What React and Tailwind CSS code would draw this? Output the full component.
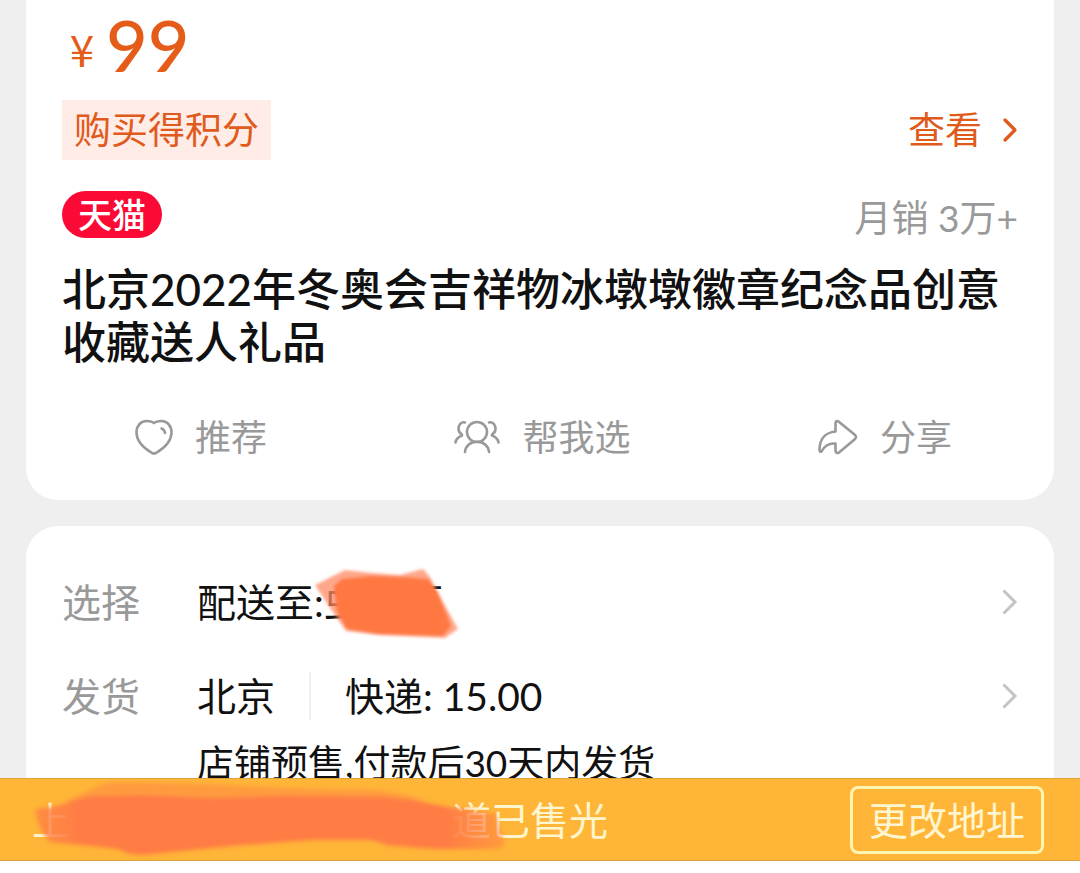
import { ChevronRight } from 'lucide-react';

const product = {
  price: '99',
  title: '北京2022年冬奥会吉祥物冰墩墩徽章纪念品创意收藏送人礼品',
  sales: '月销 3万+',
  origin: '北京',
  shipping: '快递: 15.00',
  note: '店铺预售,付款后30天内发货',
};

const HeartIcon = () => (
  <svg width="38" height="36" viewBox="0 0 38 36" fill="none" stroke="currentColor" strokeWidth="2.6" strokeLinecap="round" strokeLinejoin="round" aria-hidden="true">
    <path d="M19 4.2C17.5 2.7 14.5 2 11.5 2C5.5 2 1.5 7 1.5 13.5C1.5 22 9.5 29.5 17 34Q19 35 21 34C28.5 29.5 36.5 22 36.5 13.5C36.5 7 32.5 2 26.5 2C23.5 2 20.5 2.7 19 4.2Z" />
    <path d="M26.5 9.5Q29.5 10.5 30 14" />
  </svg>
);

const PeopleIcon = () => (
  <svg width="46" height="34" viewBox="0 0 46 34" fill="none" stroke="currentColor" strokeWidth="2.6" strokeLinecap="round" strokeLinejoin="round" aria-hidden="true">
    <circle cx="23" cy="12" r="10" />
    <path d="M11 32C11.5 26 16 21.8 23 21.8C30 21.8 34.5 26 35 32" />
    <path d="M11 2.5C7 1.5 4.5 5 4.5 9C4.5 11.5 5.5 13 8 14.5V15.5C4 17 2 19.5 1.5 22.5" />
    <path d="M35 2.5C39 1.5 41.5 5 41.5 9C41.5 11.5 40.5 13 38 14.5V15.5C42 17 44 19.5 44.5 22.5" />
  </svg>
);

const ShareIcon = () => (
  <svg width="40" height="36" viewBox="0 0 40 36" fill="none" stroke="currentColor" strokeWidth="2.6" strokeLinecap="round" strokeLinejoin="round" aria-hidden="true">
    <path d="M17.5 12.5V4Q18 1.3 20.5 2.5L36.5 15.5Q39.5 18 36.5 20.5L21 33.5Q18 35 17.5 32V24.5C11 24 6.5 26.5 3.5 32.5Q2 33.5 1.5 31C1.5 20.5 7 13.5 17.5 12.5Z" />
  </svg>
);

const actions = [
  { label: '推荐', Icon: HeartIcon },
  { label: '帮我选', Icon: PeopleIcon },
  { label: '分享', Icon: ShareIcon },
];

const RowArrow = () => (
  <svg className="ml-auto shrink-0" width="16" height="26" viewBox="0 0 16 26" fill="none" stroke="#c4c4c4" strokeWidth="3" aria-hidden="true">
    <path d="M1.5 1.5L13 13L1.5 24.5" />
  </svg>
);

// Marker strokes drawn over the private parts of the address
const AddressMark = () => (
  <svg className="absolute top-0 left-0 overflow-visible" width="146" height="72" viewBox="0 0 146 72" aria-hidden="true">
    <defs>
      <filter id="soft-edge" x="-10%" y="-10%" width="120%" height="120%">
        <feGaussianBlur stdDeviation="1.5" />
      </filter>
    </defs>
    <g filter="url(#soft-edge)">
      <path d="M3 19L33 4L60 7L88 9L111 3L118 11L131 36L146 63L133 72L66 69L34 65L18 42Z" fill="#ff8a64" opacity="0.75" />
      <path d="M30 13L60 10L90 11L116 13L126 27L139 60L131 70L66 68L35 63L25 46L22 20Z" fill="#ff7842" />
    </g>
  </svg>
);

const BarMark = () => (
  <svg className="absolute top-0 left-0" width="476" height="80" viewBox="0 0 476 80" aria-hidden="true">
    <defs>
      <linearGradient id="mark" x1="0" x2="1">
        <stop offset="0" stopColor="#ff7c45" stopOpacity="0.7" />
        <stop offset="0.07" stopColor="#ff7c45" stopOpacity="0.9" />
        <stop offset="0.1" stopColor="#ff7c45" />
        <stop offset="0.87" stopColor="#ff7c45" />
        <stop offset="0.94" stopColor="#ff7c45" stopOpacity="0.7" />
        <stop offset="1" stopColor="#ff7c45" stopOpacity="0.45" />
      </linearGradient>
      <filter id="soft-mark" x="-5%" y="-10%" width="110%" height="120%">
        <feGaussianBlur stdDeviation="2" />
      </filter>
    </defs>
    <g filter="url(#soft-mark)">
      <path d="M34 22C60 12 66 3 86 3L150 4L280 10L340 11C370 14 385 18 400 26L300 32L60 40Z" fill="#ff9640" opacity="0.85" />
      <path d="M3 30Q26 28 40 22Q56 16 76 17L110 16L180 19L250 17L350 18C385 21 400 26 430 30L464 35L473 64Q472 71 456 70L400 70L354 66Q346 61 330 61L280 61L200 67L150 72L112 76L98 75L86 70L50 66L18 63Q6 52 3 30Z" fill="url(#mark)" />
    </g>
  </svg>
);

export default function App() {
  return (
    <div
      lang="zh-CN"
      className="flex h-screen flex-col bg-white font-['Lato','Noto_Sans_CJK_SC',sans-serif] text-[#111]"
    >
      <main className="flex min-h-0 flex-1 flex-col gap-[26px] overflow-hidden bg-[#efefef] px-[26px]">
        {/* Price and title */}
        <section className="shrink-0 rounded-b-[32px] bg-white px-9 pb-[43px]">
          <div className="flex h-[100px] items-start gap-2 pl-1 text-[#e45c18]">
            <span className="w-8 text-center font-['Noto_Sans_CJK_SC',sans-serif] text-[44px] leading-[96px]">¥</span>
            <span className="text-[72px] leading-[88px] font-medium">{product.price}</span>
          </div>

          <div className="flex items-center justify-between text-[#e05a1c]">
            <span className="bg-[#ffece6] px-3 text-[37px] leading-[60px]">购买得积分</span>
            <a href="#points" className="flex items-center gap-2 text-[37px] leading-[60px]">
              查看
              <ChevronRight className="-mr-3 size-10" strokeWidth={2} />
            </a>
          </div>

          <div className="mt-[31px] flex items-start justify-between">
            <span className="rounded-full bg-[#fa0a35] px-4 text-[34px] leading-[47px] font-medium text-white">天猫</span>
            <span className="text-[37px] leading-[53px] text-[#999]">{product.sales}</span>
          </div>

          <h1 className="mt-[19px] text-[44px] leading-[53px] font-medium">{product.title}</h1>

          <div className="mt-12 flex justify-between pr-[66px] pl-[73px] text-[#999]">
            {actions.map(({ label, Icon }) => (
              <button key={label} type="button" className="flex items-center gap-[22px] text-[36px] leading-[40px]">
                <Icon />
                {label}
              </button>
            ))}
          </div>
        </section>

        {/* Delivery */}
        <section className="shrink-0 rounded-t-[32px] bg-white px-9 pt-[49px] text-[39px] leading-[54px]">
          <div className="flex items-center">
            <span className="w-[135px] text-[#999]">选择</span>
            <span>配送至:</span>
            <span className="relative -my-[9px] -ml-3 flex h-[72px] w-[146px] items-center justify-between pr-[14px] pl-3">
              <span>虫</span>
              <span>区</span>
              <AddressMark />
            </span>
            <RowArrow />
          </div>

          <div className="mt-10 flex items-center">
            <span className="w-[135px] text-[#999]">发货</span>
            <span>{product.origin}</span>
            <span className="mx-[34px] h-12 w-0.5 bg-[#f0f0f0]" />
            <span>{product.shipping}</span>
            <RowArrow />
          </div>

          <p className="mt-4 pl-[135px] text-[37px] leading-[48px]">{product.note}</p>
        </section>
      </main>

      {/* Sold-out notice */}
      <footer className="shrink-0 bg-white pb-3">
        <div className="flex items-center justify-between border-y border-[#dda23c] bg-[#ffb537] pr-9 pl-8 text-[39px] text-[#fff6cf]">
          <p className="relative flex h-[81px] items-center leading-[80px]">
            <span className="w-[420px]">上</span>
            <span>道已售光</span>
            <BarMark />
          </p>
          <button type="button" className="rounded-lg border-[3px] border-[#fff3b0] px-4 leading-[62px]">
            更改地址
          </button>
        </div>
      </footer>
    </div>
  );
}
